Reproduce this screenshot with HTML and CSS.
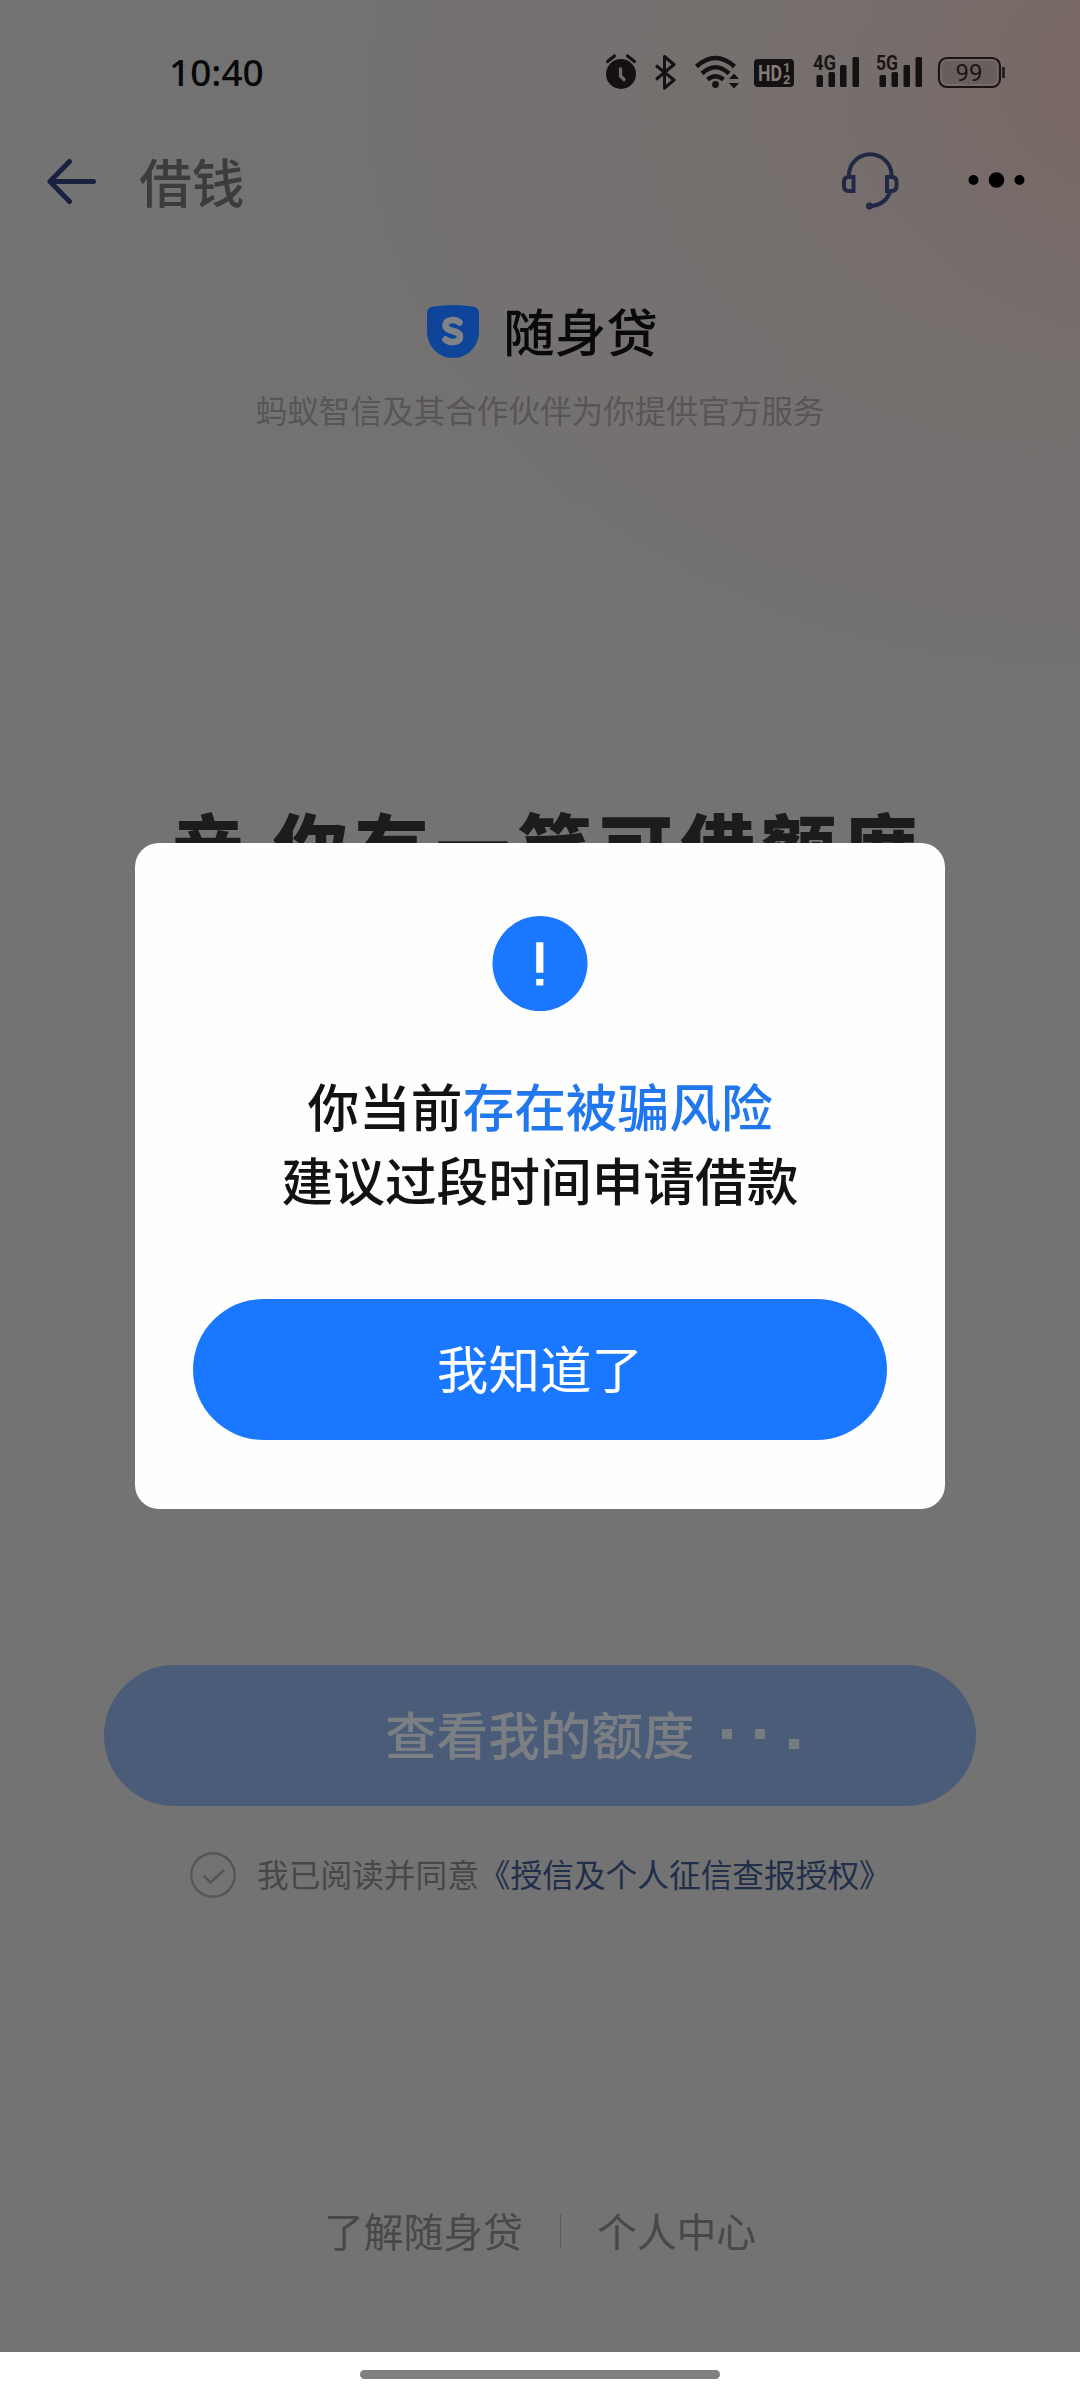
FILE: index.html
```html
<!DOCTYPE html>
<html lang="zh-CN">
<head>
<meta charset="utf-8">
<title>借钱</title>
<link rel="stylesheet" href="styles.css">
</head>
<body>
<div class="screen">
  <header class="status">
    <span class="clock">10:40</span>
    <svg class="status-icons" width="410" height="40" viewBox="600 50 410 40">
      <g fill="#131111">
        <circle cx="621" cy="74" r="15"/>
        <path d="M607.500 61.500l7-5.500M634.500 61.500l-7-5.500" stroke="#131111" stroke-width="3.200" stroke-linecap="round"/>
        <path d="M620.500 69v7l3.500 3.500" fill="none" stroke="#736b69" stroke-width="3.400" stroke-linecap="round" stroke-linejoin="round"/>
        <path d="M656 65.500l18 14.500-9.500 8V56.500l9.500 8L656 79.500" fill="none" stroke="#131111" stroke-width="3" stroke-linejoin="round"/>
        <g fill="none" stroke="#131111" stroke-width="4.500">
          <path d="M696.500 66.500Q715.500 49.500 734.500 66.500"/>
          <path d="M702 73.500Q715.500 61 729 73.500"/>
          <path d="M707.500 79.500Q715.500 73 723.500 79.500"/>
        </g>
        <circle cx="715.500" cy="84.500" r="3.400"/>
        <path d="M729 79l5-5.500 5 5.500zM729 83l5 5.500 5-5.500z"/>
        <rect x="754" y="59" width="40" height="28" rx="4"/>
        <rect x="816.500" y="75" width="6.500" height="12" rx="1.500"/>
        <rect x="828.500" y="72" width="6.500" height="15" rx="1.500"/>
        <rect x="840" y="65" width="6.500" height="22" rx="1.500"/>
        <rect x="852.500" y="57" width="6.500" height="30" rx="1.500"/>
        <rect x="879.500" y="75" width="6.500" height="12" rx="1.500"/>
        <rect x="891.500" y="72" width="6.500" height="15" rx="1.500"/>
        <rect x="903.500" y="65" width="6.500" height="22" rx="1.500"/>
        <rect x="915.500" y="57" width="6.500" height="30" rx="1.500"/>
      </g>
      <g class="status-label">
        <text x="758" y="81" font-size="22" textLength="24" lengthAdjust="spacingAndGlyphs" fill="#837b79">HD</text>
        <text x="783" y="71.500" font-size="13" fill="#837b79">1</text>
        <text x="783" y="84" font-size="13" fill="#837b79">2</text>
        <text x="813" y="70" font-size="20.500" textLength="23" lengthAdjust="spacingAndGlyphs">4G</text>
        <text x="876" y="70" font-size="20.500" textLength="22" lengthAdjust="spacingAndGlyphs">5G</text>
      </g>
      <rect x="939" y="58" width="61" height="29" rx="8" fill="none" stroke="#1a1514" stroke-width="2.200"/>
      <rect x="942" y="61" width="55" height="23" rx="5" fill="#685f5d"/>
      <path d="M1003.500 67v11" stroke="#1a1514" stroke-width="2.400"/>
      <text class="battery-label" x="969" y="81" textLength="27" lengthAdjust="spacingAndGlyphs">99</text>
    </svg>
  </header>

  <nav class="navbar">
    <svg class="back" width="50" height="48" viewBox="0 0 50 48" fill="none" stroke="#19213f" stroke-width="5" stroke-linecap="round" stroke-linejoin="round"><path d="M23.500 3.500L4 23.500L23.500 43.500M4 23.500H47.500"/></svg>
    <h1 class="nav-title">借钱</h1>
    <svg class="headset" width="60" height="60" viewBox="840 151 60 60" fill="none" stroke="#222945" stroke-width="4">
      <path d="M849 176v-2a21 20.500 0 0 1 42.500 0v2"/>
      <path d="M853.500 176h-5q-4.500 0-4.500 5v4q0 5 4.500 5h5zM887 176h5q4.500 0 4.500 5v4q0 5-4.500 5h-5z"/>
      <path d="M890 191q-5 13.500-20.500 14"/>
      <circle cx="869.500" cy="205" r="1.500"/>
    </svg>
    <svg class="more" width="60" height="20" viewBox="0 0 60 20"><circle cx="6.500" cy="8" r="5"/><circle cx="29.500" cy="8" r="7.800"/><circle cx="52.500" cy="8" r="5"/></svg>
  </nav>

  <section class="brand">
    <div class="brand-row">
      <svg width="52" height="53" viewBox="0 0 52 53"><path d="M6 1.500Q26-1.500 46 1.500Q52 2.500 52 8V26C52 42 40 53 26 53S0 42 0 26V8Q0 2.500 6 1.500Z" fill="#0e459a"/><path d="M32.500 17.500C28 13.500 18.500 14.500 18.500 20.500C18.500 27.500 33 24.500 33 31.500C33 38 23 38.500 18.500 34.500" fill="none" stroke="#7f8286" stroke-width="6.500" stroke-linecap="round"/></svg>
      <span>随身贷</span>
    </div>
    <p class="brand-note">蚂蚁智信及其合作伙伴为你提供官方服务</p>
  </section>

  <h2 class="headline">亲,<span>你有一笔可借额度</span></h2>

  <div class="apply"><span>查看我的额度</span><i></i><i></i><i></i></div>
  <p class="agree">
    <svg width="46" height="46" viewBox="0 0 46 46" fill="none" stroke="#565656" stroke-width="2.400"><circle cx="23" cy="23" r="21.700"/><path d="M13.500 23.500l7 7L34 18"/></svg>
    <span>我已阅读并同意<a>《授信及个人征信查报授权》</a></span>
  </p>

  <footer class="links"><span>了解随身贷</span><b></b><span>个人中心</span></footer>
  <div class="gesture"><span></span></div>

  <div class="dialog">
    <svg class="alert" width="96" height="96" viewBox="0 0 96 96"><circle cx="48" cy="47.500" r="47.500" fill="#1a77ff"/><path d="M44.200 26.300h7.200v30.400h-7.200zM44.200 63h7.200v6.500h-7.200z" fill="#fff"/></svg>
    <p class="message">你当前<em>存在被骗风险</em><br>建议过段时间申请借款</p>
    <button class="ok">我知道了</button>
  </div>
</div>
</body>
</html>
```
FILE: styles.css
```css
* { box-sizing: border-box; margin: 0; padding: 0; }
body {
  font-family: "Noto Sans CJK SC", sans-serif;
  font-weight: 400;
}
.screen {
  position: relative;
  display: flex;
  flex-direction: column;
  width: 1080px;
  height: 2400px;
  overflow: hidden;
  background:
    radial-gradient(ellipse 240px 320px at 1110px 40px, rgba(124, 94, 88, .35), rgba(124, 94, 88, 0)),
    radial-gradient(ellipse 960px 760px at 1080px 100px, rgba(120, 106, 103, .8), rgba(118, 110, 108, .5) 50%, rgba(115, 115, 115, 0)),
    #737373;
}
.status {
  display: flex;
  justify-content: space-between;
  height: 130px;
  padding: 50px 70px 0 169px;
}
.clock {
  margin-top: -1px;
  font: 500 37px/46px "Noto Sans", sans-serif;
  color: #080808;
}
.status-label {
  font-family: Roboto, sans-serif;
  font-weight: 700;
  fill: #1a1615;
}
.battery-label {
  font: 400 24px Roboto, sans-serif;
  text-anchor: middle;
  fill: #1a1615;
}
.navbar {
  display: flex;
  align-items: center;
  height: 104px;
  padding: 0 53px 0 46px;
}
.nav-title {
  flex: 1;
  margin-left: 43px;
  padding-bottom: 4px;
  font-size: 52.800px;
  line-height: 60px;
  font-weight: 500;
  color: #3d3c3c;
}
.more { margin-left: 67px; }
.brand {
  height: 564px;
  padding-top: 66px;
}
.brand-row {
  display: flex;
  justify-content: center;
  align-items: center;
  gap: 24px;
  height: 64px;
  padding-left: 5px;
  font-size: 51.500px;
  line-height: 64px;
  font-weight: 500;
  color: #0a0909;
}
.brand-row svg { margin-bottom: 1px; }
.brand-row span { padding-bottom: 5px; }
.brand-note {
  margin-top: 21px;
  text-align: center;
  font-size: 31.600px;
  line-height: 48px;
  color: #575555;
}
.headline {
  height: 867px;
  padding-left: 171px;
  font-size: 74px;
  line-height: 92px;
  letter-spacing: 7.500px;
  font-weight: 900;
  color: #1c1c1c;
  white-space: nowrap;
}
.headline span { margin-left: -13px; }
.apply {
  display: flex;
  align-items: center;
  align-self: center;
  width: 872px;
  height: 141px;
  padding-left: 281px;
  border-radius: 71px;
  background: #4b5c78;
  font-size: 51.600px;
  line-height: 60px;
  font-weight: 500;
  color: #7b7e83;
}
.apply span { padding-bottom: 6px; }
.apply i {
  width: 10px;
  height: 10px;
  margin: 0 0 4px 23.500px;
  background: #777c83;
}
.apply i:first-of-type { margin-left: 27px; }
.apply i:last-of-type { margin: 16px 0 0 24px; }
.agree {
  display: flex;
  align-items: center;
  gap: 21px;
  height: 48px;
  margin: 45px 0 0 190px;
  font-size: 31.700px;
  line-height: 44px;
  color: #474747;
}
.agree span { padding-bottom: 5px; }
.agree a { color: #202e49; }
.links {
  display: flex;
  justify-content: center;
  align-items: center;
  height: 60px;
  margin-top: 302px;
  font-size: 39.800px;
  line-height: 56px;
  color: #484848;
}
.links span { padding-bottom: 3px; }
.links b {
  width: 1px;
  height: 34px;
  margin: 0 36px 0 37px;
  background: #5c5c5c;
}
.gesture {
  height: 48px;
  margin-top: auto;
  padding-top: 18px;
  background: #fff;
}
.gesture span {
  display: block;
  width: 360px;
  height: 9px;
  margin: 0 auto;
  border-radius: 5px;
  background: #808080;
}
.dialog {
  position: absolute;
  left: 135px;
  top: 843px;
  display: flex;
  flex-direction: column;
  align-items: center;
  width: 810px;
  height: 666px;
  padding-top: 73px;
  border-radius: 24px;
  background: #fefefe;
}
.message {
  margin-top: 56px;
  text-align: center;
  font-size: 51.700px;
  line-height: 73.500px;
  font-weight: 500;
  color: #121212;
}
.message em { font-style: normal; color: #2178ee; }
.ok {
  width: 694px;
  height: 141px;
  margin-top: 84px;
  padding-bottom: 5px;
  border: 0;
  border-radius: 71px;
  background: #1a77ff;
  font: 400 51.600px/60px "Noto Sans CJK SC", sans-serif;
  color: #fff;
}
```
